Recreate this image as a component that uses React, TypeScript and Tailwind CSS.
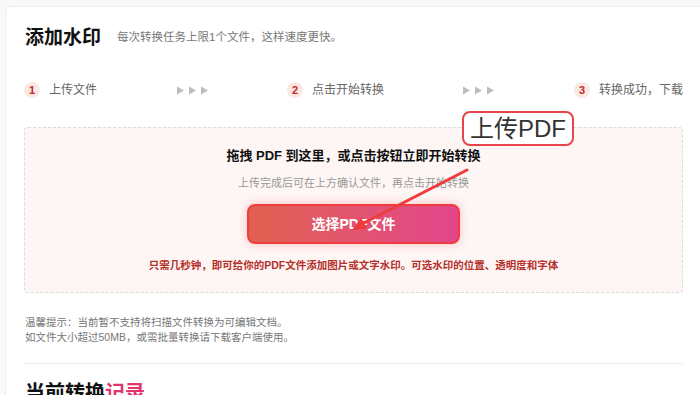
import React from "react";

const font = "font-['Liberation_Sans','Noto_Sans_CJK_SC',sans-serif]";

const steps = [
  { n: "1", label: "上传文件" },
  { n: "2", label: "点击开始转换" },
  { n: "3", label: "转换成功，下载" },
];

const Arrows = () => (
  <svg width="31" height="9" viewBox="0 0 31 9" className="shrink-0">
    {[0, 12, 24].map(x => (
      <path key={x} d={`M${x} 0.5 L${x + 7} 4.5 L${x} 8.5 Z`} fill="#bdbdbd" />
    ))}
  </svg>
);

const Step = ({ n, label }: { n: string; label: string }) => (
  <div className="flex items-center gap-[9px]">
    <span className="flex h-4 w-4 items-center justify-center rounded-full bg-[#fbe8e3] text-[11px] font-bold leading-none text-[#c4262c]">
      {n}
    </span>
    <span className="text-[12px] leading-4 text-[#666]">{label}</span>
  </div>
);

const App = () => {
  return (
    <div className={`relative h-[395px] w-[700px] overflow-hidden bg-[#f9f9f9] pl-[5px] pt-[6px] ${font}`}>
      {/* main card */}
      <div className="w-[697px] rounded-tl-md border border-[#eeeeee] bg-white px-[18px] pt-[17px]">
        <div className="flex items-center pl-px">
          <h1 className="text-[19px] font-bold leading-7 text-[#111]">添加水印</h1>
          <span className="ml-4 text-[11.5px] text-[#777]">每次转换任务上限1个文件，这样速度更快。</span>
        </div>

        {/* steps */}
        <div className="mt-[30px] flex items-center justify-between">
          <Step {...steps[0]} />
          <Arrows />
          <Step {...steps[1]} />
          <Arrows />
          <Step {...steps[2]} />
        </div>

        {/* upload area */}
        <div className="mt-[29px] flex h-[166px] flex-col items-center rounded-sm border border-dashed border-[#dcdcdc] bg-[#fdf6f5] pt-[18px]">
          <p className="text-[13px] font-bold leading-5 text-[#111]">拖拽 PDF 到这里，或点击按钮立即开始转换</p>
          <p className="mt-[9px] text-[11px] leading-4 text-[#999]">上传完成后可在上方确认文件，再点击开始转换</p>
          <button className="mt-[13px] h-[40px] w-[213px] rounded-lg border-2 border-[#ef3d3f] bg-gradient-to-r from-[#e0604e] to-[#e4458b] text-[14px] font-bold text-white shadow-[0_0_10px_rgba(240,90,90,0.35)]">
            选择PDF文件
          </button>
          <p className="mt-[13px] text-[10.5px] font-bold leading-4 text-[#b5302b]">
            只需几秒钟，即可给你的PDF文件添加图片或文字水印。可选水印的位置、透明度和字体
          </p>
        </div>

        {/* tips */}
        <div className="mt-[22px] pl-px text-[10.5px] leading-[15px] text-[#777]">
          <p>温馨提示：当前暂不支持将扫描文件转换为可编辑文档。</p>
          <p>如文件大小超过50MB，或需批量转换请下载客户端使用。</p>
        </div>

        <div className="mt-[18px] h-px bg-[#ececec]" />

        <h2 className="mt-[15px] pl-px text-[20px] font-bold leading-7 text-[#111]">
          当前转换<span className="text-[#e2356b]">记录</span>
        </h2>
      </div>

      {/* annotation */}
      <div className="absolute left-[462px] top-[111px] flex h-[35px] w-[112px] items-center justify-center rounded-lg border-2 border-[#e8454a] bg-white text-[24px] leading-none text-[#333]">
        上传PDF
      </div>
      <svg className="pointer-events-none absolute left-0 top-0" width="700" height="395">
        <line x1="467" y1="170" x2="360" y2="225" stroke="#ee3b3b" strokeWidth="3" strokeLinecap="round" />
        <polygon points="352,230 367,228.5 361,217.5" fill="#ee3b3b" />
      </svg>
    </div>
  );
};

export default App;
